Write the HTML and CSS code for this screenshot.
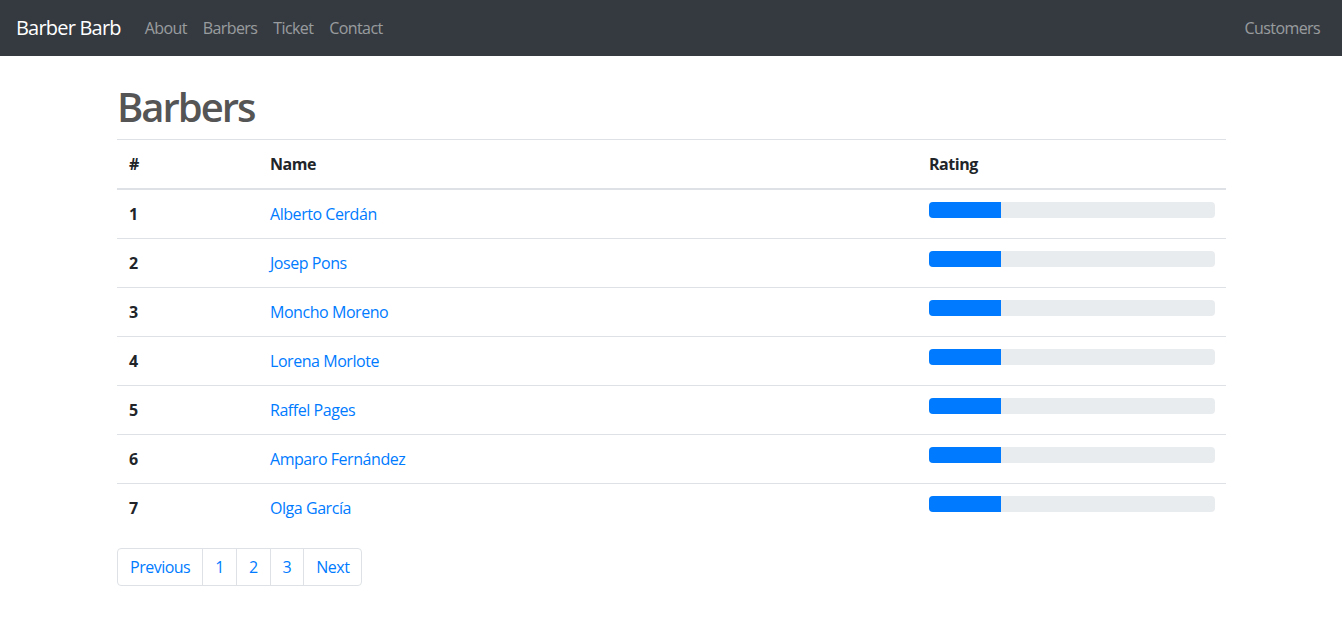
FILE: index.html
```html
<!DOCTYPE html>
<html lang="en">
<head>
<meta charset="utf-8">
<title>Barber Barb</title>
<link rel="stylesheet" href="styles.css">
</head>
<body>
<nav class="navbar">
  <div class="nav-left">
    <a class="brand" href="#">Barber Barb</a>
    <a class="nav-link" href="#">About</a>
    <a class="nav-link" href="#">Barbers</a>
    <a class="nav-link" href="#">Ticket</a>
    <a class="nav-link" href="#">Contact</a>
  </div>
  <a class="nav-link" href="#">Customers</a>
</nav>
<main class="container">
  <h1 class="title">Barbers</h1>
  <table class="table">
    <thead>
      <tr><th class="col-id">#</th><th>Name</th><th class="col-rating">Rating</th></tr>
    </thead>
    <tbody>
      <tr><th>1</th><td><a href="#">Alberto Cerdán</a></td><td><div class="progress"><div class="bar" style="width:25%"></div></div></td></tr>
      <tr><th>2</th><td><a href="#">Josep Pons</a></td><td><div class="progress"><div class="bar" style="width:25%"></div></div></td></tr>
      <tr><th>3</th><td><a href="#">Moncho Moreno</a></td><td><div class="progress"><div class="bar" style="width:25%"></div></div></td></tr>
      <tr><th>4</th><td><a href="#">Lorena Morlote</a></td><td><div class="progress"><div class="bar" style="width:25%"></div></div></td></tr>
      <tr><th>5</th><td><a href="#">Raffel Pages</a></td><td><div class="progress"><div class="bar" style="width:25%"></div></div></td></tr>
      <tr><th>6</th><td><a href="#">Amparo Fernández</a></td><td><div class="progress"><div class="bar" style="width:25%"></div></div></td></tr>
      <tr><th>7</th><td><a href="#">Olga García</a></td><td><div class="progress"><div class="bar" style="width:25%"></div></div></td></tr>
    </tbody>
  </table>
  <ul class="pagination">
    <li><a href="#">Previous</a></li>
    <li><a href="#">1</a></li>
    <li><a href="#">2</a></li>
    <li><a href="#">3</a></li>
    <li><a href="#">Next</a></li>
  </ul>
</main>
</body>
</html>
```
FILE: styles.css
```css
* { box-sizing: border-box; }
html, body { margin: 0; }
body {
  font-family: "Open Sans", "Noto Sans", sans-serif;
  font-size: 16px;
  line-height: 1.5;
  color: #212529;
  background: #fff;
}
a { text-decoration: none; color: #007bff; }

.navbar {
  height: 56px;
  background: #343a40;
  display: flex;
  align-items: center;
  justify-content: space-between;
  padding: 0 16px;
}
.nav-left { display: flex; align-items: center; }
.brand {
  color: #fff;
  font-size: 20px;
  line-height: 30px;
  margin-right: 16px;
  padding: 5px 0;
  letter-spacing: -0.8px;
}
.nav-link {
  color: rgba(255,255,255,0.5);
  padding: 8px 8px;
  letter-spacing: -0.6px;
}
.navbar > .nav-link { padding-right: 6px; }

.container {
  width: 1140px;
  margin: 0 auto;
  padding: 27px 15px 0 16px;
}
.title {
  margin: 0 0 8px;
  font-size: 40px;
  line-height: 48px;
  font-weight: 600;
  color: #555;
  letter-spacing: -2px;
}
.table {
  width: 100%;
  border-collapse: collapse;
  margin-bottom: 16px;
}
.table th, .table td {
  padding: 12px;
  text-align: left;
  vertical-align: top;
  border-top: 1px solid #dee2e6;
  line-height: 24px;
  letter-spacing: -0.45px;
}
.table th { font-weight: 700; }
.table thead th {
  border-bottom: 2px solid #dee2e6;
  vertical-align: bottom;
}
.col-id { width: 141px; }
.col-rating { width: 309px; }
.progress {
  height: 16px;
  background: #e9ecef;
  border-radius: 4px;
  overflow: hidden;
  display: flex;
  margin-right: -1px;
}
.bar { background: #007bff; height: 100%; }

.pagination {
  list-style: none;
  margin: 0;
  padding: 0;
  display: flex;
}
.pagination li a {
  display: block;
  padding: 6px 12px;
  line-height: 24px;
  border: 1px solid #dee2e6;
  margin-left: -1px;
  color: #007bff;
  letter-spacing: -0.5px;
}
.pagination li:first-child a {
  margin-left: 0;
  border-radius: 4px 0 0 4px;
}
.pagination li:last-child a { border-radius: 0 4px 4px 0; }
```
